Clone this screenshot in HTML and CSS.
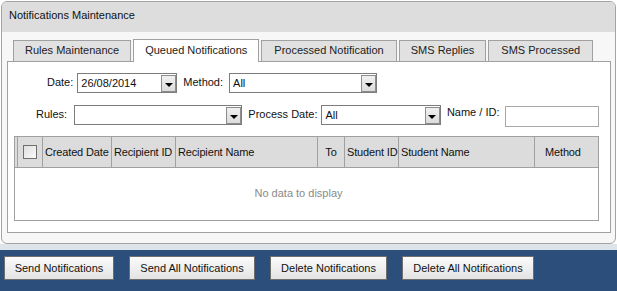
FILE: index.html
```html
<!DOCTYPE html>
<html lang="en">

<head>
  <meta charset="utf-8">
  <title>Notifications Maintenance</title>
  <link rel="stylesheet" href="styles.css">
</head>

<body>
  <div class="nm-panel">
    <div class="nm-panel-head">Notifications Maintenance</div>
    <div class="nm-panel-body">
      <div class="nm-tabs">
        <div class="nm-tab">Rules Maintenance</div>
        <div class="nm-tab nm-tab-active">Queued Notifications</div>
        <div class="nm-tab nm-tab-wide">Processed Notification</div>
        <div class="nm-tab">SMS Replies</div>
        <div class="nm-tab nm-tab-wide">SMS Processed</div>
      </div>
      <div class="nm-tab-content">
        <div class="nm-row nm-row-first">
          <span class="nm-label lbl-date">Date:</span>
          <div class="nm-combo w-date"><span class="nm-combo-text">26/08/2014</span><span class="nm-combo-btn"><i class="nm-arrow"></i></span></div>
          <span class="nm-label lbl-gap">Method:</span>
          <div class="nm-combo w-method"><span class="nm-combo-text">All</span><span class="nm-combo-btn"><i class="nm-arrow"></i></span></div>
        </div>
        <div class="nm-row nm-row-second">
          <span class="nm-label lbl-rules">Rules:</span>
          <div class="nm-combo w-rules"><span class="nm-combo-text"></span><span class="nm-combo-btn"><i class="nm-arrow"></i></span></div>
          <span class="nm-label lbl-pdate">Process Date:</span>
          <div class="nm-combo w-pdate"><span class="nm-combo-text">All</span><span class="nm-combo-btn"><i class="nm-arrow"></i></span></div>
          <span class="nm-label lbl-gap lbl-name">Name / ID:</span>
          <div class="nm-text w-name"></div>
        </div>
        <div class="nm-grid">
          <div class="nm-grid-head">
            <div class="nm-cell"></div>
            <div class="nm-cell nm-cell-check"><span class="nm-check"></span></div>
            <div class="nm-cell">Created Date</div>
            <div class="nm-cell">Recipient ID</div>
            <div class="nm-cell">Recipient Name</div>
            <div class="nm-cell nm-cell-center">To</div>
            <div class="nm-cell">Student ID</div>
            <div class="nm-cell">Student Name</div>
            <div class="nm-cell nm-cell-method">Method</div>
          </div>
          <div class="nm-grid-empty">No data to display</div>
        </div>
      </div>
    </div>
  </div>
  <div class="nm-strip"></div>
  <div class="nm-footer">
    <button class="nm-button btn-send">Send Notifications</button>
    <button class="nm-button btn-send-all">Send All Notifications</button>
    <button class="nm-button btn-delete">Delete Notifications</button>
    <button class="nm-button btn-delete-all">Delete All Notifications</button>
  </div>
</body>

</html>
```

FILE: styles.css
```css
html, body, div, span, button {
	margin: 0;
	padding: 0;
	box-sizing: border-box;
}
html {
	background-color: #fff;
	font-family: 'Liberation Sans', 'Arial', sans-serif;
	font-size: 11px;
	color: #111;
}
body {
	width: 617px;
	height: 291px;
	overflow: hidden;
}
.nm-panel {
	margin: 1px 1px 0 1px;
	height: 243px;
	border: 1px solid #a3a3a3;
	border-radius: 6px;
	background-color: #f7f7f7;
	overflow: hidden;
}
.nm-panel-head {
	height: 30px;
	line-height: 26px;
	padding-left: 7px;
	background-color: #dddddd;
}
.nm-panel-body {
	padding: 7px 4px 0 5px;
}
.nm-tabs {
	display: flex;
	align-items: flex-end;
	height: 22px;
	padding-left: 6px;
	gap: 2px;
}
.nm-tab {
	height: 21px;
	line-height: 19px;
	padding: 0 11px;
	border: 1px solid #a0a0a0;
	border-bottom: none;
	background-color: #e1e1e1;
	color: #222;
	white-space: nowrap;
}
.nm-tab-wide {
	padding: 0 12px;
}
.nm-tab-active {
	position: relative;
	z-index: 1;
	height: 23px;
	margin-bottom: -1px;
	line-height: 20px;
	background-color: #fff;
}
.nm-tab-content {
	height: 172px;
	border: 1px solid #a0a0a0;
	background-color: #fff;
	padding: 11px 11px 0 6px;
}
.nm-row {
	display: flex;
	align-items: center;
	height: 20px;
}
.nm-row-second {
	margin-top: 11px;
	height: 22px;
}
.nm-label {
	white-space: nowrap;
	margin-top: -2px;
}
.lbl-date { margin-left: 33px; margin-right: 4px; }
.lbl-gap { margin-left: 6px; margin-right: 6px; }
.lbl-rules { margin-left: 22px; margin-right: 7px; }
.lbl-pdate { margin-left: 6px; margin-right: 4px; }
.lbl-name { margin-top: -6px; }
.nm-combo {
	display: flex;
	height: 20px;
	border: 1px solid #7c7c7c;
	background-color: #fff;
}
.nm-combo-text {
	flex: 1;
	padding-left: 3px;
	line-height: 19px;
}
.nm-combo-btn {
	display: flex;
	align-items: center;
	justify-content: center;
	width: 15px;
	margin-top: 1px;
	height: 17px;
	border: 1px solid #8d8d8d;
	background: linear-gradient(#f0f0f0, #dcdcdc);
}
.nm-arrow {
	display: block;
	margin-top: 3px;
	width: 0;
	height: 0;
	border-left: 4px solid transparent;
	border-right: 4px solid transparent;
	border-top: 4px solid #000;
}
.w-date { width: 100px; }
.w-method { width: 148px; }
.w-rules { width: 169px; }
.w-pdate { width: 120px; }
.nm-text {
	width: 94px;
	height: 21px;
	margin-top: 2px;
	border: 1px solid #a8a8a8;
	background-color: #fff;
}
.nm-grid {
	margin-top: 10px;
	width: 585px;
	height: 85px;
	border: 1px solid #a0a0a0;
}
.nm-grid-head {
	display: grid;
	grid-template-columns: 3px 25px 69px 64px 142px 27px 54px 136px 63px;
	height: 31px;
	background-color: #dcdcdc;
	border-bottom: 1px solid #a0a0a0;
}
.nm-cell {
	display: flex;
	align-items: center;
	padding-left: 2px;
	border-right: 1px solid #a0a0a0;
	white-space: nowrap;
	letter-spacing: -0.15px;
	color: #111;
}
.nm-cell:first-child { padding: 0; }
.nm-cell:last-child { border-right: none; }
.nm-cell-check { padding-left: 5px; }
.nm-cell-center { justify-content: center; padding-left: 0; }
.nm-cell-method { padding-left: 10px; }
.nm-check {
	display: block;
	width: 14px;
	height: 14px;
	border: 1px solid #6f6f6f;
	background: linear-gradient(135deg, #dedede, #fbfbfb);
}
.nm-grid-empty {
	height: 52px;
	line-height: 50px;
	text-align: center;
	padding-right: 16px;
	color: #8a8a8a;
}
.nm-strip {
	height: 6px;
	background-color: #dde5ea;
}
.nm-footer {
	display: flex;
	gap: 15px;
	height: 41px;
	padding: 6px 0 0 4px;
	background-color: #2c4e7b;
}
.nm-button {
	height: 24px;
	padding: 0;
	border: 1px solid #6e6e6e;
	background: linear-gradient(#fbfbfb, #e3e3e3);
	font-family: 'Liberation Sans', 'Arial', sans-serif;
	font-size: 11px;
	color: #111;
	white-space: nowrap;
}
.btn-send { width: 110px; }
.btn-send-all { width: 126px; }
.btn-delete { width: 117px; }
.btn-delete-all { width: 132px; }
```
